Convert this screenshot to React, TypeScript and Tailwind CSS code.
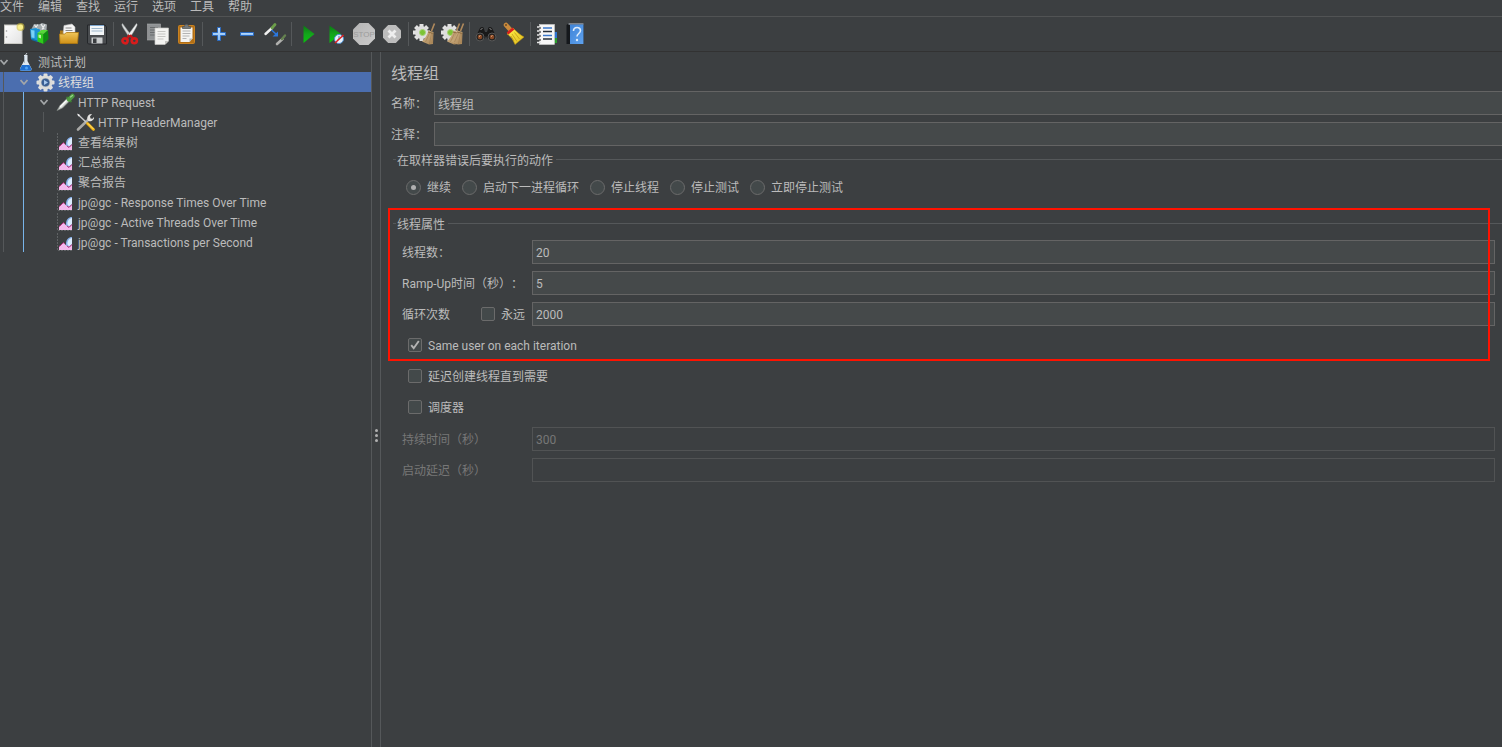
import React from "react";

type IconProps = { children: React.ReactNode; size?: number };

function Svg({ children, size = 24 }: IconProps) {
  return (
    <svg
      width={size}
      height={size}
      viewBox={`0 0 ${size} ${size}`}
      fill="none"
      aria-hidden="true"
      className="block shrink-0"
    >
      {children}
    </svg>
  );
}

function Gradients() {
  return (
    <svg width="0" height="0" className="absolute" aria-hidden="true">
      <defs>
        <linearGradient id="folder" x1="0" y1="0" x2="0" y2="1">
          <stop offset="0" stopColor="#f0c65a" />
          <stop offset="1" stopColor="#cf9016" />
        </linearGradient>
        <linearGradient id="paper" x1="0" y1="0" x2="1" y2="1">
          <stop offset="0" stopColor="#ffffff" />
          <stop offset="1" stopColor="#e2e2e2" />
        </linearGradient>
        <linearGradient id="play" x1="0" y1="0" x2="0" y2="1">
          <stop offset="0" stopColor="#0a7a12" />
          <stop offset="0.5" stopColor="#14a51c" />
          <stop offset="1" stopColor="#06c40c" />
        </linearGradient>
        <linearGradient id="blue" x1="0" y1="0" x2="0" y2="1">
          <stop offset="0" stopColor="#c4e0fc" />
          <stop offset="1" stopColor="#86bdf6" />
        </linearGradient>
        <linearGradient id="book" x1="0" y1="0" x2="1" y2="1">
          <stop offset="0" stopColor="#3f84d8" />
          <stop offset="1" stopColor="#5fa2ee" />
        </linearGradient>
        <linearGradient id="broom" x1="0" y1="0" x2="1" y2="1">
          <stop offset="0" stopColor="#d9bd90" />
          <stop offset="1" stopColor="#a88455" />
        </linearGradient>
        <linearGradient id="yellow" x1="0" y1="0" x2="1" y2="1">
          <stop offset="0" stopColor="#fff04a" />
          <stop offset="1" stopColor="#e0bd1c" />
        </linearGradient>
        <linearGradient id="grey" x1="0" y1="0" x2="1" y2="1">
          <stop offset="0" stopColor="#b4b4b4" />
          <stop offset="1" stopColor="#cbcbcb" />
        </linearGradient>
      </defs>
    </svg>
  );
}

const NewIcon = () => (
  <Svg>
    <rect x="3.500" y="3" width="17.500" height="18.500" fill="url(#paper)" stroke="#c9c9c4" />
    <circle cx="5.500" cy="9" r=".8" fill="#9a9a9a" />
    <circle cx="5.500" cy="15" r=".8" fill="#9a9a9a" />
    <circle cx="19.500" cy="5" r="4" fill="#d8c43a" opacity=".6" />
    <circle cx="19.500" cy="5" r="2.600" fill="#fbf08a" />
  </Svg>
);

const TemplatesIcon = () => (
  <Svg>
    <path d="M2.500 7L5 2l5 .5L13 1l5 1.500L17.500 8 9 10z" fill="#a4abae" />
    <path d="M5.500 3l3 4M9 2.500l-3 4M12 2l3 5M16 2.500l-3 5" stroke="#eceeee" strokeWidth="1.200" />
    <path d="M1 7l6-1 4 1.500v13l-9-3.500z" fill="#1c93d4" />
    <path d="M2 8l3.500.5v7.500l-3-.5z" fill="#7ad2f6" />
    <path d="M2.500 16.500l6 2v1.500l-6-2z" fill="#0f6ea8" />
    <path d="M8.500 11l6 1v10l-6-2.500z" fill="#2ecb1a" />
    <path d="M14.500 12l4.500-4 .5 9-5 5z" fill="#0c8d10" />
    <path d="M8.500 11l4-3L19 8l-4.500 4z" fill="#57d83a" />
    <path d="M9.500 12.500l2.500.5v3.500l-2.500-1z" fill="#b8f5a4" />
  </Svg>
);

const OpenIcon = () => (
  <Svg>
    <path d="M3 8.500h6l1 2h9V20H3z" fill="#a87718" />
    <path d="M7 3.500l8-1.500 3 3v8H6z" fill="#f5f5f5" stroke="#bdbdbd" strokeWidth=".6" />
    <path d="M8.500 6h6M8.500 8.500h7" stroke="#8a8a8a" />
    <path d="M2.500 12h5l2-1.500h12L20.500 21.500H3z" fill="url(#folder)" stroke="#b07a12" strokeWidth=".8" />
  </Svg>
);

const SaveIcon = () => (
  <Svg>
    <path d="M2.500 3h17.500l1.500 2v17H3.500l-1-1z" fill="#4a4d50" stroke="#24272a" />
    <rect x="5" y="3" width="14" height="10" fill="#f3f6f8" />
    <path d="M5 3.500h14" stroke="#7fa8d0" />
    <path d="M6.500 6.500h11M6.500 9h11" stroke="#9eb7cc" />
    <rect x="6.500" y="15.500" width="11" height="6" fill="#c9cccd" />
    <rect x="8" y="16.500" width="3.500" height="4.500" fill="#3a3d40" />
  </Svg>
);

const CutIcon = () => (
  <Svg>
    <path d="M4.500 1.500c-1.500 1 0 3 1 5l5.500 8.500 2-2z" fill="#d6dadb" stroke="#8e9293" strokeWidth=".5" />
    <path d="M18.500 1.500c1.500 1 0 3-1 5L12.500 15l-2.500-2z" fill="#f0f2f2" stroke="#9a9e9f" strokeWidth=".5" />
    <path d="M11.500 13l-2 3M12 13l2.500 3" stroke="#c01818" strokeWidth="2.500" />
    <ellipse cx="7" cy="18.800" rx="2.600" ry="2.400" stroke="#d81c1c" strokeWidth="2.600" transform="rotate(20 7 18.800)" />
    <ellipse cx="16.300" cy="18.800" rx="2.600" ry="2.400" stroke="#d81c1c" strokeWidth="2.600" />
  </Svg>
);

const CopyIcon = () => (
  <Svg>
    <rect x="1.500" y="2" width="13" height="16" fill="#8f9294" stroke="#a9abac" strokeWidth=".6" />
    <path d="M4 5.500h8M4 8h8M4 10.500h6M4 13h5" stroke="#696c6e" />
    <path d="M9 6h13.500v13l-3.500 3.500H9z" fill="#f3f3f1" stroke="#c6c6c3" strokeWidth=".7" />
    <path d="M11.500 9.500h8M11.500 12h8M11.500 14.500h8M11.500 17h6" stroke="#c4c4c1" />
    <path d="M22.500 19H19v3.500z" fill="#c4c4c0" />
  </Svg>
);

const PasteIcon = () => (
  <Svg>
    <rect x="4.500" y="3.500" width="16" height="18" rx="1" fill="#b36f14" stroke="#c98222" />
    <path d="M6.500 5.500h12v11L15.500 20h-9z" fill="#f4f4f2" />
    <path d="M8.500 9h8M8.500 11.500h8M8.500 14h7M8.500 16.500h4" stroke="#b4b4b4" />
    <path d="M18.500 16.500h-3V20z" fill="#b8b8b4" />
    <path d="M8.500 6.500V4.500h2c0-3 4-3 4 0h2v2z" fill="#73787a" stroke="#4c5052" strokeWidth=".7" />
  </Svg>
);

const PlusIcon = () => (
  <Svg>
    <path d="M10.500 5.500h3v5h5v3h-5v5h-3v-5h-5v-3h5z" fill="url(#blue)" stroke="#2b6cc4" />
  </Svg>
);

const MinusIcon = () => (
  <Svg>
    <path d="M5.500 10.500h13v3h-13z" fill="url(#blue)" stroke="#2b6cc4" />
  </Svg>
);

const ToggleIcon = () => (
  <Svg>
    <path d="M2.500 12l6.500-6" stroke="#f0f0f0" strokeWidth="2.400" strokeLinecap="round" />
    <path d="M9 6l3-3.500" stroke="#6c9e4a" strokeWidth="2.800" strokeLinecap="round" />
    <path d="M8.500 8l5 4.500" stroke="#2b78e0" strokeWidth="1.500" />
    <path d="M15 9.500v5h-5.500z" fill="#2b78e0" />
    <path d="M14 22l5.500-5" stroke="#b0b0ae" strokeWidth="2.600" strokeLinecap="round" />
    <path d="M19 17l3-3.500" stroke="#64814f" strokeWidth="2.400" strokeLinecap="round" />
  </Svg>
);

const PlayIcon = () => (
  <Svg>
    <path d="M7.500 3.500L18.500 12 7.500 21z" fill="url(#play)" />
  </Svg>
);

const PlayNoPauseIcon = () => (
  <Svg>
    <path d="M5.500 3.500L17 12 5.500 21z" fill="url(#play)" />
    <circle cx="15" cy="17" r="4.500" fill="#e9f2fb" stroke="#4a90d2" />
    <path d="M15 14v3l-2 1.500" stroke="#4a78a8" />
    <path d="M11 21l8.500-8" stroke="#e02020" strokeWidth="1.600" />
  </Svg>
);

const StopIcon = () => (
  <Svg>
    <path d="M7.500 1h9L23 7.500v9L16.500 23h-9L1 16.500v-9z" fill="url(#grey)" />
    <text
      x="12"
      y="15"
      textAnchor="middle"
      fontSize="8"
      fontFamily="Liberation Sans, sans-serif"
      fill="#9c9c9c"
    >
      STOP
    </text>
  </Svg>
);

const ShutdownIcon = () => (
  <Svg>
    <path d="M8.200 3h7.600L21 8.200v7.600L15.800 21H8.200L3 15.800V8.200z" fill="#bdbdbd" />
    <path d="M8.500 8.500l7 7M15.500 8.500l-7 7" stroke="#eeeeee" strokeWidth="2.800" />
  </Svg>
);

const gearTeeth = [0, 45, 90, 135, 180, 225, 270, 315];

function SmallGear() {
  return (
    <g>
      {gearTeeth.map((a) => (
        <rect key={a} x="6.500" y="2" width="4" height="4" fill="#e2e2e2" transform={`rotate(${a} 8.500 10.500)`} />
      ))}
      <circle cx="8.500" cy="10.500" r="6.500" fill="#dedede" />
      <circle cx="9.500" cy="10.500" r="3" fill="#7cc435" stroke="#a9d37c" />
    </g>
  );
}

const Broom = ({ x }: { x: number }) => (
  <g transform={`translate(${x} 0)`}>
    <path d="M20.500 1.500L17.500 9" stroke="#b08a5c" strokeWidth="1.600" />
    <path d="M14.500 8.500l5 1.500-.5 12-4 .5-7-3c3-3 5-6 6.500-11z" fill="url(#broom)" />
    <path d="M15.500 11l-4 9M17.500 11l-2 11M18.500 12l-.5 9" stroke="#96744a" strokeWidth=".5" />
    <path d="M14 10l5.500 1.500" stroke="#7a5a34" strokeWidth=".8" />
  </g>
);

const ClearIcon = () => (
  <Svg>
    <SmallGear />
    <Broom x={1} />
  </Svg>
);

const ClearAllIcon = () => (
  <Svg>
    <SmallGear />
    <Broom x={-2} />
    <Broom x={2} />
  </Svg>
);

const SearchIcon = () => (
  <Svg>
    <path d="M6 6c2-2 4-1 4 1l1 3h2l1-3c0-2 2-3 4-1l4 8-4 5-5-3-1-2-1 2-5 3-4-5z" fill="#191919" />
    <path d="M6.500 7.500l2-1M15.500 6.500l2 1" stroke="#8f8f8f" />
    <circle cx="6" cy="15" r="4" fill="#222" stroke="#565656" />
    <circle cx="18" cy="15" r="4" fill="#222" stroke="#565656" />
    <circle cx="6" cy="15" r="2.300" fill="#8a4a26" />
    <circle cx="18" cy="15" r="2.300" fill="#8a4a26" />
    <path d="M5 14.500l1.500-1M17 14.500l1.500-1" stroke="#e9b48e" />
  </Svg>
);

const ResetSearchIcon = () => (
  <Svg>
    <path d="M4 3L8.500 8" stroke="#c98a3c" strokeWidth="4.500" strokeLinecap="round" />
    <circle cx="4" cy="3" r="1" fill="#6b4a24" />
    <path d="M11 6c4 4 7 7 11 9l-9 7.500c-2-5-4-8-8-10.500z" fill="url(#yellow)" stroke="#b8900f" strokeWidth=".6" />
    <path d="M10 12l5 7.500M12.500 10.500l5 6.500M9 14l3 5" stroke="#c29c18" strokeWidth=".8" />
    <path d="M11.500 6.500l-6 5" stroke="#d8201c" strokeWidth="2.800" />
  </Svg>
);

const FunctionHelperIcon = () => (
  <Svg>
    <rect x="17" y="10" width="5" height="6" fill="#2f74d0" />
    <rect x="17" y="16" width="5" height="5" fill="#2a9c2c" />
    <rect x="4.500" y="2.500" width="15" height="20" fill="#f7f7f7" stroke="#cfcfcf" strokeWidth=".6" />
    <path d="M8 6h9M8 13.500h9" stroke="#3b78cc" strokeWidth="1.300" />
    <path d="M8 9.500h9M8 17h9" stroke="#262f3a" strokeWidth="1.300" />
    <path d="M2 5h4M2 9h4M2 13h4M2 17h4M2 20.500h4" stroke="#e6e6e6" strokeWidth="1.500" />
    <path d="M4 6h2M4 10h2M4 14h2M4 18h2" stroke="#1e1e1e" />
  </Svg>
);

const HelpIcon = () => (
  <Svg>
    <path d="M3.500 3l2-1.500h15V22H3.500z" fill="#15181c" />
    <path d="M5.500 1.500h15v1h-15z" fill="#d4dce6" />
    <rect x="7" y="2.500" width="13.500" height="19.500" fill="url(#book)" />
    <path d="M10.500 9c0-4.500 7-4.500 7-.5 0 3-3.500 3-3.500 6" stroke="#dcebfb" strokeWidth="1.600" />
    <circle cx="14" cy="18" r="1.200" fill="#dcebfb" />
  </Svg>
);

type Tool = { name: string; icon: React.ReactNode; disabled?: boolean };

const toolGroups: Tool[][] = [
  [
    { name: "新建", icon: <NewIcon /> },
    { name: "模板", icon: <TemplatesIcon /> },
    { name: "打开", icon: <OpenIcon /> },
    { name: "保存", icon: <SaveIcon /> },
  ],
  [
    { name: "剪切", icon: <CutIcon /> },
    { name: "复制", icon: <CopyIcon /> },
    { name: "粘贴", icon: <PasteIcon /> },
  ],
  [
    { name: "展开", icon: <PlusIcon /> },
    { name: "收起", icon: <MinusIcon /> },
    { name: "切换", icon: <ToggleIcon /> },
  ],
  [
    { name: "启动", icon: <PlayIcon /> },
    { name: "不停顿启动", icon: <PlayNoPauseIcon /> },
    { name: "停止", icon: <StopIcon />, disabled: true },
    { name: "关闭", icon: <ShutdownIcon />, disabled: true },
  ],
  [
    { name: "清除", icon: <ClearIcon /> },
    { name: "清除全部", icon: <ClearAllIcon /> },
  ],
  [
    { name: "搜索", icon: <SearchIcon /> },
    { name: "重置搜索", icon: <ResetSearchIcon /> },
  ],
  [
    { name: "函数助手", icon: <FunctionHelperIcon /> },
    { name: "帮助", icon: <HelpIcon /> },
  ],
];

const FlaskIcon = () => (
  <Svg size={20}>
    <path d="M8 3h3.500v6l4 7.500c.5 1.500-.5 2.500-2 2.500H6c-1.500 0-2.500-1-2-2.500L8 9z" fill="#dfe8f0" />
    <path d="M6 13h7.500l2 4c.5 1.200-.5 1.800-2 1.800H6c-1.500 0-2.500-.6-2-1.800z" fill="#1f6fd0" />
    <path d="M8.500 4v7" stroke="#aebac4" />
    <path d="M9.500 3l1.500-2" stroke="#c4ccd2" />
    <circle cx="10.500" cy="16" r="1.500" fill="#4fa2f2" />
  </Svg>
);

const GearIcon = () => (
  <Svg size={20}>
    {gearTeeth.map((a) => (
      <rect key={a} x="7.500" y="1.500" width="4" height="5" rx="1" fill="#e0e0de" transform={`rotate(${a} 9.500 10.500)`} />
    ))}
    <circle cx="9.500" cy="10.500" r="5.800" fill="#9ba8b8" stroke="#dcdcda" strokeWidth="2.400" />
    <circle cx="9.500" cy="10.500" r="3.800" fill="#3a5e92" />
    <path d="M8 8l4 2.500L8 13z" fill="#a9c8ec" />
  </Svg>
);

const PipetteIcon = () => (
  <Svg size={20}>
    <path d="M1 18.500l3-5 7-7 2.500 2.500-7 7z" fill="#d4d8d4" stroke="#7e8480" strokeWidth=".7" />
    <path d="M4 15l6.500-6.500" stroke="#fff" strokeWidth="1.200" />
    <path d="M10.500 5l5 5" stroke="#3d7a34" strokeWidth="1.800" />
    <path d="M13 7.500l3.500-3.500" stroke="#4f9a42" strokeWidth="4.500" strokeLinecap="round" />
    <path d="M14.500 5l2-1.500" stroke="#9cd68c" strokeWidth="1.200" strokeLinecap="round" />
  </Svg>
);

const ToolsIcon = () => (
  <Svg size={20}>
    <path d="M2 17.500L13 7" stroke="#a9a9a7" strokeWidth="2.600" strokeLinecap="round" />
    <path d="M11.500 8c-1-3 1-6.500 4.500-6L14 4.500l.5 2 2 .3L18 5c.5 3-3 5-5.500 4z" fill="#e2e2e0" />
    <path d="M2 2.500l8.500 8" stroke="#c8cacb" strokeWidth="1.400" />
    <path d="M1 1.500l3 1.500-1.500 1.500z" fill="#f0f0f0" />
    <path d="M11.500 11.500l6 6" stroke="#f2b414" strokeWidth="2.800" strokeLinecap="round" />
    <path d="M12 11.500l5.500 5.500" stroke="#ffe27a" />
  </Svg>
);

const ChartIcon = () => (
  <Svg size={20}>
    <path d="M1.500 1v17.500h15" stroke="#5f6264" strokeDasharray="2 1" />
    <path d="M10 11c.500-3.500 2.500-6 6-6v7l-3 3c-2 .5-3.500-1.500-3-4z" fill="#86aee8" />
    <path d="M11.500 10.500c.5-2.500 2-4.200 4.500-4.500v6l-2.500 2c-1.500 0-2.500-1.500-2-3.500z" fill="#dcecff" />
    <path d="M3 18v-3.500L7.500 11l3.500 3 2 1 3-2.500V18z" fill="#f4b8ec" />
    <path d="M3 14.500l1-.5L7.500 10.500 9 12M11 14l2 1.500 3-3" stroke="#b8327e" />
  </Svg>
);

function Chevron() {
  return (
    <svg width="9" height="8" viewBox="0 0 9 8" fill="none" aria-hidden="true" className="block">
      <path d="M.5 2l3.500 4 3.500-4" stroke="#a4a7a9" strokeWidth="1.800" />
    </svg>
  );
}

type Node = { level: number; label: string; icon: React.ReactNode; open?: boolean; selected?: boolean };

const nodes: Node[] = [
  { level: 0, label: "测试计划", icon: <FlaskIcon />, open: true },
  { level: 1, label: "线程组", icon: <GearIcon />, open: true, selected: true },
  { level: 2, label: "HTTP Request", icon: <PipetteIcon />, open: true },
  { level: 3, label: "HTTP HeaderManager", icon: <ToolsIcon /> },
  { level: 2, label: "查看结果树", icon: <ChartIcon /> },
  { level: 2, label: "汇总报告", icon: <ChartIcon /> },
  { level: 2, label: "聚合报告", icon: <ChartIcon /> },
  { level: 2, label: "jp@gc - Response Times Over Time", icon: <ChartIcon /> },
  { level: 2, label: "jp@gc - Active Threads Over Time", icon: <ChartIcon /> },
  { level: 2, label: "jp@gc - Transactions per Second", icon: <ChartIcon /> },
];

function TreeRow({ node }: { node: Node }) {
  return (
    <li
      role="treeitem"
      aria-level={node.level + 1}
      aria-selected={!!node.selected}
      className={`flex h-5 items-center whitespace-nowrap ${node.selected ? "bg-[#4b6eaf] text-[#dddddd]" : ""}`}
    >
      {Array.from({ length: node.level }, (_, i) => (
        <span key={i} className="flex h-5 w-5 shrink-0 pl-[3px]">
          <span className={`w-px ${i === 1 ? "bg-[#78b4ea]" : "bg-[#55585a]"}`} />
        </span>
      ))}
      <span className="w-4 shrink-0">{node.open && <Chevron />}</span>
      {node.icon}
      <span className="pl-[2px] pt-[2px]">{node.label}</span>
    </li>
  );
}

function Legend({ children }: { children: React.ReactNode }) {
  return (
    <legend className="flex h-4 w-full items-start pl-[2px]">
      <span className="mr-px mt-[7px] h-px w-[3px] bg-[#55585a]" />
      <span className="pt-px">{children}</span>
      <span className="ml-[3px] mt-[7px] h-px flex-1 bg-[#55585a]" />
    </legend>
  );
}

const inputBase = "h-6 min-w-0 flex-1 border px-[3px] pt-px outline-none";
const inputOn = "border-[#646464] bg-[#45494a] text-[#bbbbbb]";
const inputOff = "border-[#515354] bg-[#3c3f41] text-[#777777]";

function Field({
  id,
  label,
  value,
  disabled,
  children,
}: {
  id: string;
  label: string;
  value: string;
  disabled?: boolean;
  children?: React.ReactNode;
}) {
  return (
    <div className="flex h-6 items-center pl-[11px] pr-[7px]">
      <div className="flex w-[130px] shrink-0 items-center justify-between pr-[7px]">
        <label htmlFor={id} className={`whitespace-nowrap pt-[2px] ${disabled ? "text-[#777777]" : ""}`}>
          {label}
        </label>
        {children}
      </div>
      <input
        id={id}
        type="text"
        defaultValue={value}
        disabled={disabled}
        className={`${inputBase} ${disabled ? inputOff : inputOn}`}
      />
    </div>
  );
}

function Check({ label, checked }: { label: string; checked?: boolean }) {
  return (
    <label className="flex h-6 items-center gap-[6px] whitespace-nowrap">
      <span className="relative block size-[14px]">
        <input
          type="checkbox"
          defaultChecked={checked}
          className="peer block size-[14px] appearance-none rounded-xs border border-[#6b6b6b] bg-[#43494a]"
        />
        <svg
          width="14"
          height="14"
          viewBox="0 0 14 14"
          fill="none"
          aria-hidden="true"
          className="pointer-events-none absolute inset-0 hidden peer-checked:block"
        >
          <path d="M3.200 7.200l2.500 3L10.800 3" stroke="#b4b4b4" strokeWidth="1.900" />
        </svg>
      </span>
      <span className="pt-[2px]">{label}</span>
    </label>
  );
}

const menus = ["文件", "编辑", "查找", "运行", "选项", "工具", "帮助"];
const actions = ["继续", "启动下一进程循环", "停止线程", "停止测试", "立即停止测试"];

export default function App() {
  return (
    <div className="flex min-h-screen flex-col overflow-hidden bg-[#3c3f41] font-[Roboto,'Noto_Sans_CJK_SC',sans-serif] text-[12px] leading-4 text-[#bbbbbb] [text-spacing-trim:space-all]">
      <Gradients />
      <nav className="flex h-[17px] items-start gap-[14px] border-b border-[#515354]">
        {menus.map((m) => (
          <button key={m} type="button" className="leading-[14px]">
            {m}
          </button>
        ))}
      </nav>

      <div role="toolbar" aria-label="工具栏" className="-ml-px flex h-[35px] items-center border-b border-[#323232]">
        {toolGroups.map((group, i) => (
          <React.Fragment key={i}>
            {i > 0 && <span className="mx-[2px] h-6 w-px shrink-0 bg-[#55585a]" />}
            {group.map((t) => (
              <button
                key={t.name}
                type="button"
                aria-label={t.name}
                disabled={t.disabled}
                className="flex w-7 shrink-0 justify-center"
              >
                {t.icon}
              </button>
            ))}
          </React.Fragment>
        ))}
      </div>

      <div className="flex flex-1">
        <aside className="w-[371px] shrink-0">
          <ul role="tree" aria-label="测试计划">
            {nodes.map((n) => (
              <TreeRow key={n.label} node={n} />
            ))}
          </ul>
        </aside>

        <div
          role="separator"
          aria-orientation="vertical"
          className="flex w-[10px] shrink-0 flex-col items-center gap-[2px] border-x border-[#55585a] pt-[377px]"
        >
          <span className="size-[3px] rounded-full bg-[#b0b0b0]" />
          <span className="size-[3px] rounded-full bg-[#b0b0b0]" />
          <span className="size-[3px] rounded-full bg-[#b0b0b0]" />
        </div>

        <main className="min-w-0 flex-1 pl-[10px] pt-3">
          <h1 className="text-[16px] leading-5">线程组</h1>

          <div className="mt-[7px] flex flex-col gap-[7px]">
            <div className="flex items-center">
              <label htmlFor="name" className="w-[43px] shrink-0 pt-[2px]">
                名称：
              </label>
              <input id="name" type="text" defaultValue="线程组" className={`${inputBase} ${inputOn} border-r-0`} />
            </div>
            <div className="flex items-center">
              <label htmlFor="comment" className="w-[43px] shrink-0 pt-[2px]">
                注释：
              </label>
              <input id="comment" type="text" className={`${inputBase} ${inputOn} border-r-0`} />
            </div>
          </div>

          <fieldset className="mt-[6px] min-w-0">
            <Legend>在取样器错误后要执行的动作</Legend>
            <div className="mt-[9px] flex h-5 items-center gap-[11px] pl-[15px]">
              {actions.map((a, i) => (
                <label key={a} className="flex items-center gap-[6px] whitespace-nowrap">
                  <input
                    type="radio"
                    name="on-error"
                    defaultChecked={i === 0}
                    className="peer flex size-[15px] appearance-none items-center justify-center rounded-full border border-[#6b6b6b] bg-[#43494a] before:size-[5px] before:rounded-full checked:before:bg-[#b0b0b0]"
                  />
                  <span className="pt-[2px]">{a}</span>
                </label>
              ))}
            </div>
          </fieldset>

          <fieldset className="mt-[19px] min-w-0">
            <div className="relative flex flex-col gap-2">
              <Legend>线程属性</Legend>
              <div className="flex flex-col gap-[7px]">
                <Field id="threads" label="线程数：" value="20" />
                <Field id="ramp" label="Ramp-Up时间（秒）：" value="5" />
                <Field id="loops" label="循环次数" value="2000">
                  <Check label="永远" />
                </Field>
                <div className="pl-[17px]">
                  <Check label="Same user on each iteration" checked />
                </div>
              </div>
              <div className="pointer-events-none absolute -bottom-1 -left-[3px] -top-2 right-3 border-2 border-[#ff1200]" />
            </div>
            <div className="mt-[7px] flex flex-col gap-[7px]">
              <div className="pl-[17px]">
                <Check label="延迟创建线程直到需要" />
              </div>
              <div className="pl-[17px]">
                <Check label="调度器" />
              </div>
            </div>
            <div className="mt-2 flex flex-col gap-[7px]">
              <Field id="duration" label="持续时间（秒）" value="300" disabled />
              <Field id="delay" label="启动延迟（秒）" value="" disabled />
            </div>
          </fieldset>
        </main>
      </div>
    </div>
  );
}
